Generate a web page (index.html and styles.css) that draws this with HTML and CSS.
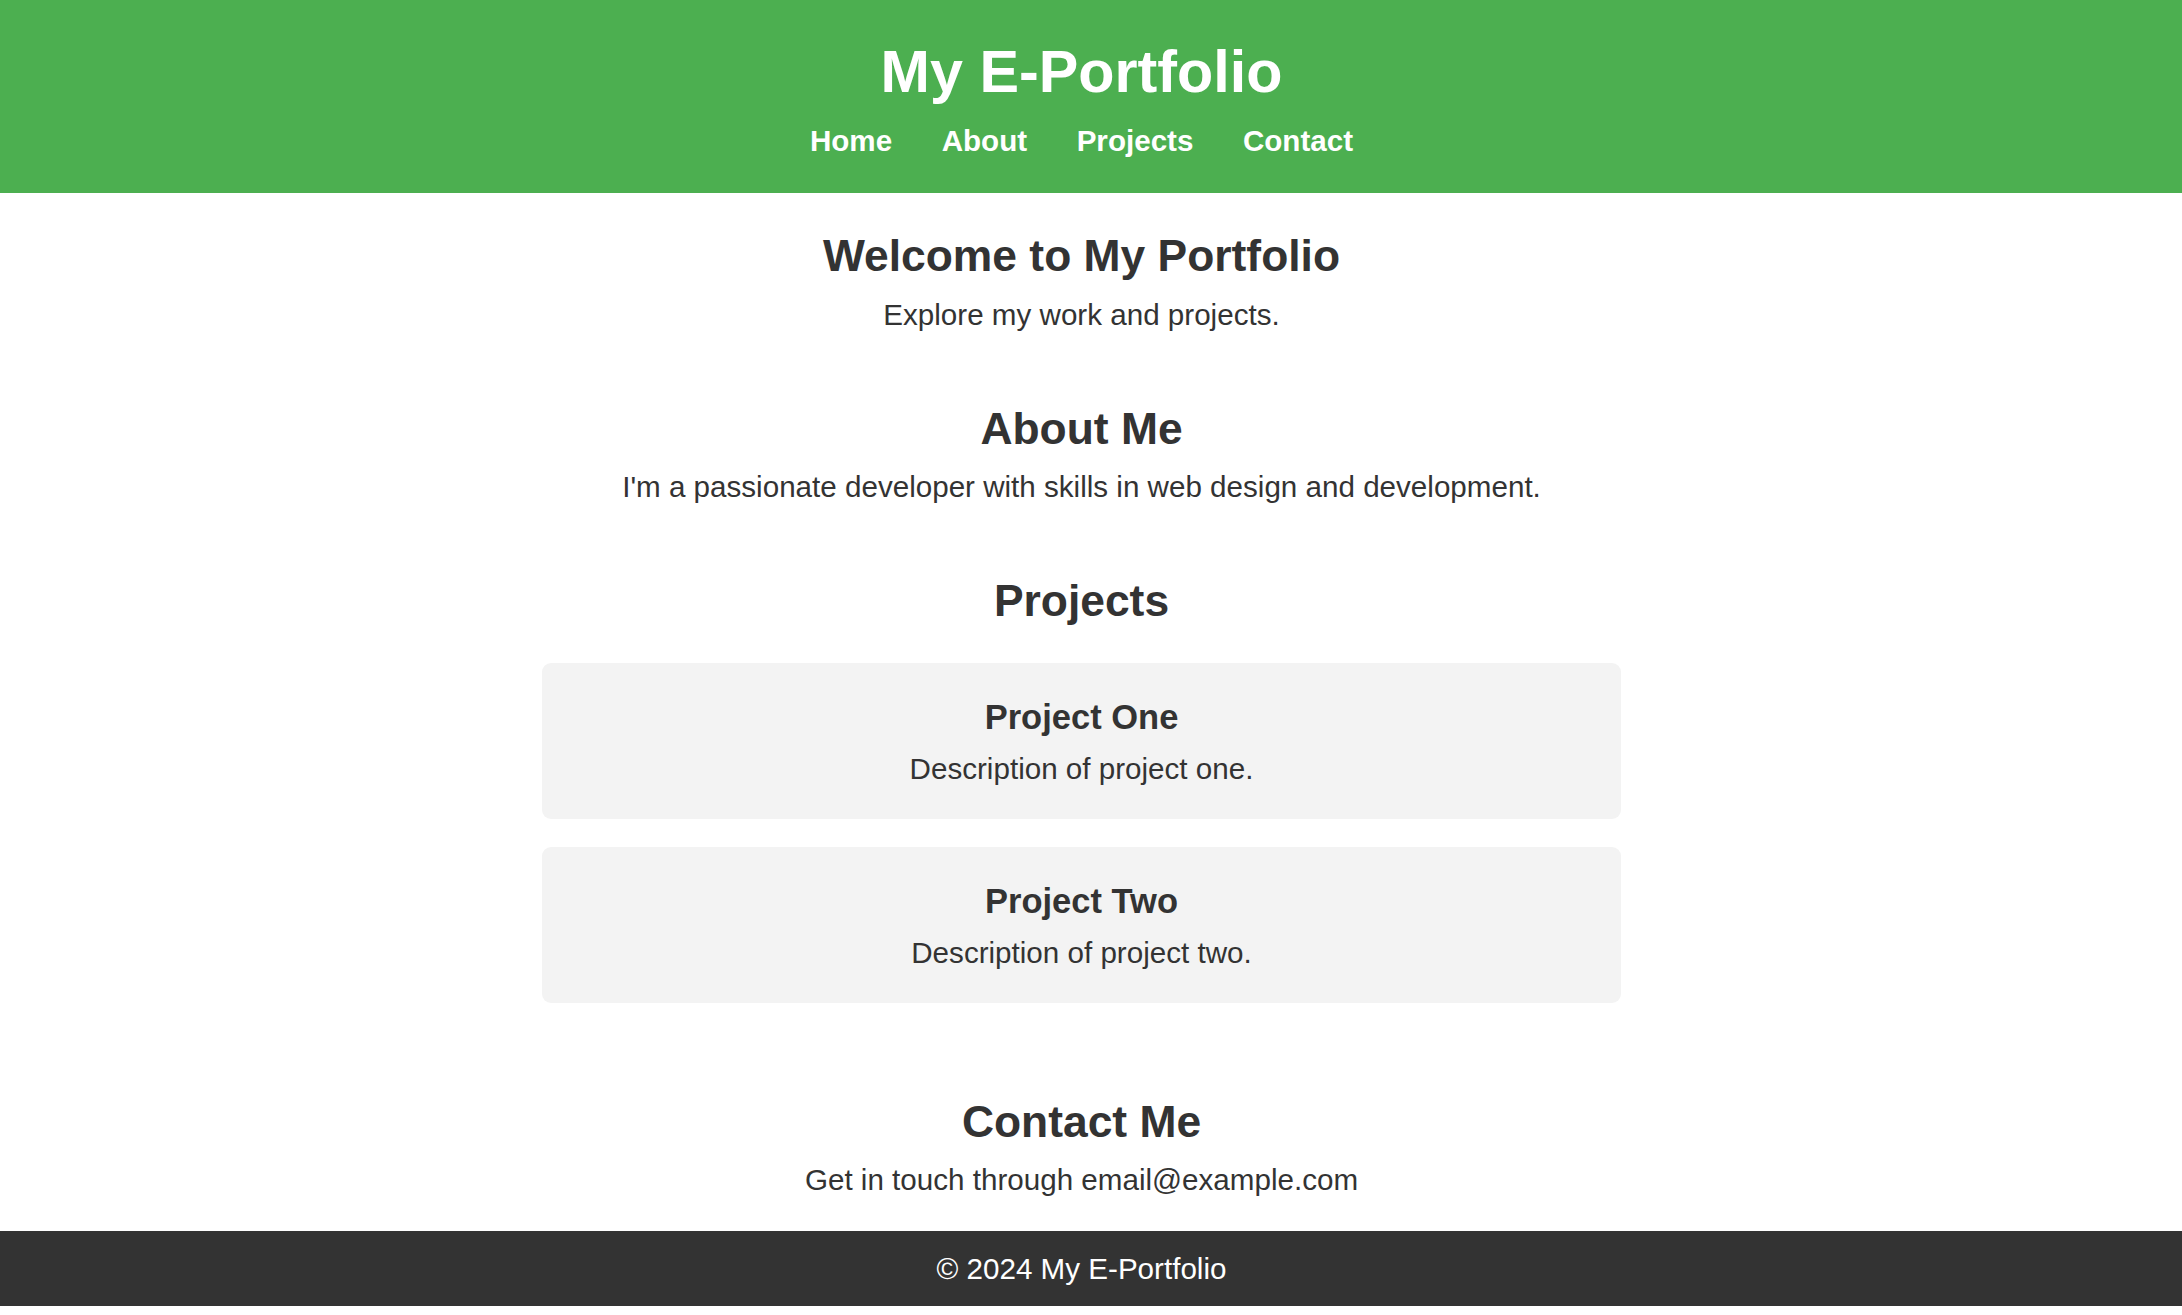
FILE: index.html
```html
<!DOCTYPE html>
<html lang="en">
<head>
<meta charset="utf-8">
<title>My E-Portfolio</title>
<link rel="stylesheet" href="styles.css">
</head>
<body>
<header class="site-header">
  <h1 class="site-title">My E-Portfolio</h1>
  <nav class="site-nav">
    <a class="nav-link" href="#home">Home</a>
    <a class="nav-link" href="#about">About</a>
    <a class="nav-link" href="#projects">Projects</a>
    <a class="nav-link" href="#contact">Contact</a>
  </nav>
</header>
<main class="site-main">
  <section class="section" id="home">
    <h2 class="section-title">Welcome to My Portfolio</h2>
    <p class="section-text">Explore my work and projects.</p>
  </section>
  <section class="section" id="about">
    <h2 class="section-title">About Me</h2>
    <p class="section-text">I'm a passionate developer with skills in web design and development.</p>
  </section>
  <section class="section" id="projects">
    <h2 class="section-title">Projects</h2>
    <div class="project">
      <h3 class="project-title">Project One</h3>
      <p class="project-text">Description of project one.</p>
    </div>
    <div class="project">
      <h3 class="project-title">Project Two</h3>
      <p class="project-text">Description of project two.</p>
    </div>
  </section>
  <section class="section" id="contact">
    <h2 class="section-title">Contact Me</h2>
    <p class="section-text">Get in touch through email@example.com</p>
  </section>
</main>
<footer class="site-footer">
  <p class="footer-text">&copy; 2024 My E-Portfolio</p>
</footer>
</body>
</html>
```
FILE: styles.css
```css
html, body {
  background: #ffffff;
}

body {
  margin: 0;
  padding: 0;
  font-family: "Liberation Sans", Arial, sans-serif;
  color: #333333;
}

.site-header {
  background: #4caf50;
  color: #ffffff;
  text-align: center;
  padding: 26px 19px 29px 0;
}

.site-title {
  margin: 0;
  font-size: 59.3px;
  line-height: 92px;
  font-weight: bold;
}

.site-nav {
  display: flex;
  justify-content: center;
  gap: 49.5px;
  font-size: 29.6px;
  line-height: 46px;
  font-weight: bold;
}

.nav-link {
  color: #ffffff;
  text-decoration: none;
}

.section {
  padding: 28px 55px 28px 36px;
  text-align: center;
}

.section-title {
  margin: 0 0 1.5px;
  font-size: 44.4px;
  line-height: 69px;
  font-weight: bold;
}

.section-text {
  margin: 0;
  font-size: 29.6px;
  line-height: 46px;
}

.project {
  max-width: 1079px;
  margin: 27.5px auto;
  padding: 27.5px 27px 27px;
  box-sizing: border-box;
  background: #f3f3f3;
  border-radius: 9px;
}

.project-title {
  margin: 0 0 2px;
  font-size: 34.5px;
  line-height: 54px;
  font-weight: bold;
}

.project-text {
  margin: 0;
  font-size: 29.6px;
  line-height: 46px;
}

.site-footer {
  background: #333333;
  color: #ffffff;
  text-align: center;
  padding: 14.5px 19px 14.5px 0;
}

.footer-text {
  margin: 0;
  font-size: 29.6px;
  line-height: 46px;
}
```
